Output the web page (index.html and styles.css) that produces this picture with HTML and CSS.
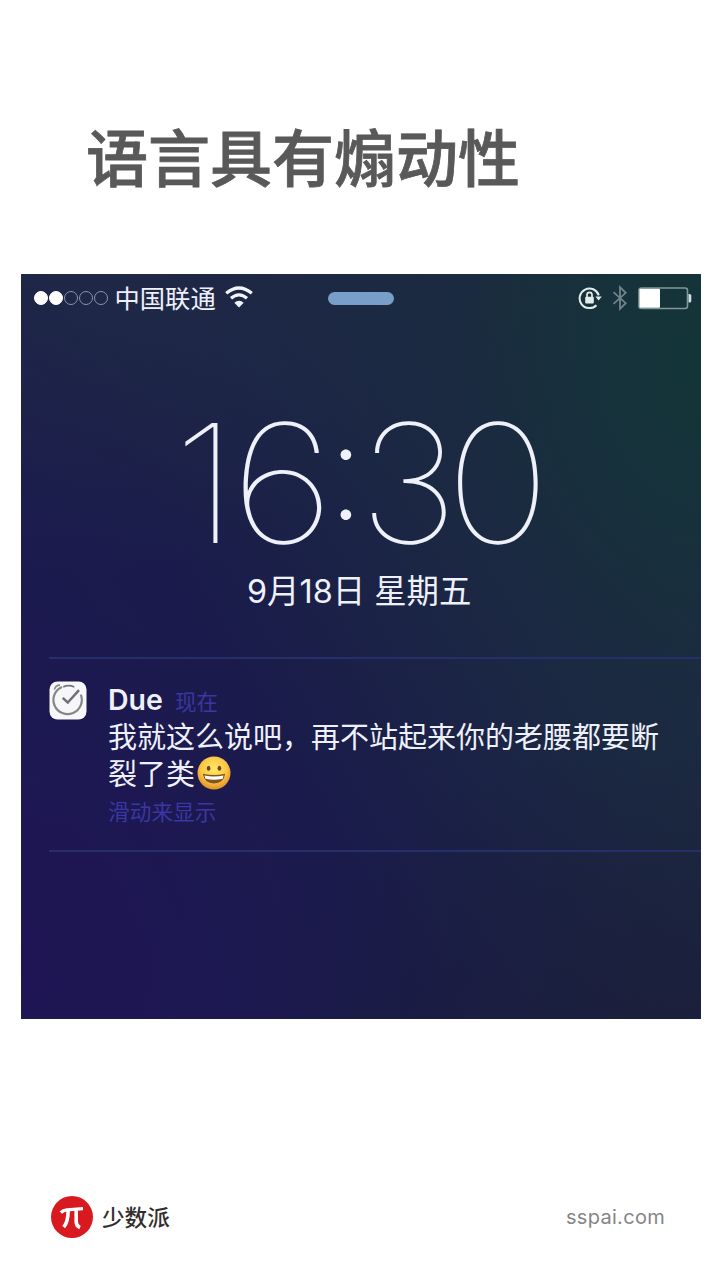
FILE: index.html
```html
<!DOCTYPE html>
<html lang="zh-CN">
<head>
<meta charset="utf-8">
<title>语言具有煽动性</title>
<link rel="stylesheet" href="styles.css">
</head>
<body>
<main class="page">
  <h1 class="title">语言具有煽动性</h1>

  <section class="phone">
    <div class="status">
      <div class="status-left">
        <div class="signal"><i class="dot full"></i><i class="dot full"></i><i class="dot"></i><i class="dot"></i><i class="dot"></i></div>
        <span class="carrier">中国联通</span>
        <svg class="wifi" width="28" height="22" viewBox="0 0 28 22" fill="none" stroke="#f2f5fc" stroke-width="3.2">
          <path d="M1.2 7.2Q14 -3.2 26.8 7.2"/>
          <path d="M6 12.3Q14 5.4 22 12.3"/>
          <path d="M14 21.5L9.3 16.8Q14 12.8 18.7 16.8Z" fill="#f2f5fc" stroke="none"/>
        </svg>
      </div>
      <div class="grabber"></div>
      <div class="status-right">
        <svg class="lock" width="24" height="24" viewBox="0 0 24 24" fill="none" stroke="#e4ebed" stroke-width="2">
          <path d="M18.4 19.2A9.8 9.8 0 1 1 20.8 9.4"/>
          <path d="M17.4 10.4h6.4l-3.2 4.2z" fill="#e4ebed" stroke="none"/>
          <rect x="7.2" y="10.8" width="8.6" height="6.8" rx="1" fill="#e4ebed" stroke="none"/>
          <path d="M9 11V8.8a2.5 2.5 0 0 1 5 0V11" stroke-width="1.7"/>
        </svg>
        <svg class="bluetooth" width="16" height="26" viewBox="0 0 16 26" fill="none" stroke="#71838a" stroke-width="1.8">
          <path d="M1.5 7.2L13.7 18.2L8 23.8V2.2L13.7 7.8L1.5 18.8"/>
        </svg>
        <svg class="battery" width="54" height="23" viewBox="0 0 54 23">
          <rect x="1" y="1" width="48.5" height="20.5" rx="2.5" fill="none" stroke="#81979b" stroke-width="1.6"/>
          <rect x="1.5" y="1.8" width="20.5" height="19" rx="1" fill="#fff"/>
          <path d="M50.5 7h1q1.8 0 1.8 1.5v5.5q0 1.5-1.8 1.5h-1z" fill="#d5dddf"/>
        </svg>
      </div>
    </div>

    <div class="clock"><span class="one">1</span><span class="six">6</span><span class="colon">:</span><span class="three">3</span><span class="zero">0</span></div>
    <div class="date">9月18日 星期五</div>

    <article class="notice">
      <svg class="app" width="38" height="40" viewBox="0 0 38 40" fill="none">
        <rect x=".5" y=".5" width="37" height="38" rx="8" fill="#f7f7fa"/>
        <path d="M13 5.9A14.2 14.2 0 1 0 31.8 13.6" stroke="#85868c" stroke-width="2.2"/>
        <path d="M14.2 5.8Q20 3.4 25.3 6" stroke="#74757b" stroke-width="1.8"/>
        <path d="M5.3 8.6Q6.5 4.2 11 4.1" stroke="#8a8b91" stroke-width="1.6"/>
        <path d="M13.7 16.8L18.8 21.5L30 9.2" stroke="#707178" stroke-width="2.5"/>
      </svg>
      <div class="message">
        <div class="heading"><b class="name">Due</b><span class="when">现在</span></div>
        <p class="body">我就这么说吧，再不站起来你的老腰都要断</p>
        <p class="body second">裂了类<svg class="smile" role="img" aria-label="😀" width="34" height="34" viewBox="0 0 34 34">
          <defs><radialGradient id="face" cx=".5" cy=".38" r=".63"><stop offset="0" stop-color="#ffe666"/><stop offset=".6" stop-color="#fbc845"/><stop offset="1" stop-color="#de8d27"/></radialGradient></defs>
          <circle cx="17" cy="17" r="16.5" fill="url(#face)"/>
          <ellipse cx="11.6" cy="12.2" rx="1.8" ry="2.5" fill="#6d451c"/>
          <ellipse cx="22.4" cy="12.2" rx="1.8" ry="2.5" fill="#6d451c"/>
          <path d="M5.8 17.8Q17 20.4 28.2 17.8Q26.7 27.5 17 27.5Q7.3 27.5 5.8 17.8Z" fill="#80551d"/>
          <path d="M7.4 19.4Q17 21.4 26.6 19.4L25.6 22.8Q17 24.8 8.4 22.8Z" fill="#fff"/>
        </svg></p>
        <p class="hint">滑动来显示</p>
      </div>
    </article>
  </section>

  <footer class="footer">
    <div class="brand">
      <svg width="42" height="42" viewBox="0 0 42 42" fill="none" stroke="#fff">
        <circle cx="21" cy="21" r="21" fill="#d91920" stroke="none"/>
        <path d="M9.8 16.6Q12 14.2 16 13.8L32 12.6" stroke-width="3.3"/>
        <path d="M17.1 14.5Q17.3 25.5 12.7 31.2" stroke-width="3.6"/>
        <path d="M25.2 14V26Q25.3 30 29 31.6" stroke-width="3.6"/>
      </svg>
      <span class="brand-name">少数派</span>
    </div>
    <span class="site">sspai.com</span>
  </footer>
</main>
</body>
</html>
```

FILE: styles.css
```css
* { box-sizing: border-box; }
body { margin: 0; background: #fff; }
h1, p { margin: 0; }
svg { display: block; flex: none; }

.page {
  width: 720px;
  height: 1280px;
  display: flex;
  flex-direction: column;
  overflow: hidden;
  font-family: Inter, "Noto Sans CJK SC", sans-serif;
}
.title {
  height: 274px;
  padding: 110px 0 0 86px;
  color: #595959;
  font: 500 62px/90px "Noto Sans CJK SC", sans-serif;
  -webkit-text-stroke: .8px #595959;
  white-space: nowrap;
}

.phone {
  width: 680px;
  height: 745px;
  margin-left: 21px;
  color: #eef0fa;
  background:
    radial-gradient(ellipse 240px 330px at 100% 12%, rgba(18, 54, 56, .85), rgba(22, 48, 56, 0)),
    radial-gradient(ellipse 330px 360px at 0% 92%, rgba(32, 20, 84, .8), rgba(28, 22, 80, 0)),
    radial-gradient(ellipse 400px 330px at 12% -4%, rgba(31, 42, 70, .95), rgba(30, 38, 70, 0)),
    radial-gradient(ellipse 480px 340px at 100% 108%, rgba(27, 29, 56, .95), rgba(27, 31, 58, 0)),
    linear-gradient(60deg, #1c1954 5%, #1a1b4b 38%, #1b2842 65%, #1a303b 100%);
}

.status {
  height: 48px;
  padding: 0 9px 0 12.5px;
  display: grid;
  grid-template-columns: 294.5px 66px 1fr;
  align-items: center;
}
.status-left, .status-right { display: flex; align-items: center; }
.status-left { padding-bottom: 3px; }
.status-right { justify-content: flex-end; }
.signal { display: flex; gap: 1px; width: 76px; padding-top: 3px; }
.dot { width: 14.2px; height: 14.2px; border: 1.4px solid #8a94aa; border-radius: 50%; }
.dot.full { border-color: #fff; background: #fff; }
.carrier { margin-left: 5px; width: 102px; font: 400 25.3px/36px "Noto Sans CJK SC", sans-serif; white-space: nowrap; }
.wifi { margin: 1px 0 0 8.5px; }
.grabber { height: 13px; margin-top: 1px; border-radius: 7px; background: #789fca; }
.lock { margin-bottom: 1px; }
.bluetooth { margin: 0 10px; }

.clock {
  height: 235px;
  padding: 81px 0 0 157px;
  display: flex;
  font: 100 165px/160px Inter, sans-serif;
}
.clock span { display: flex; flex: none; justify-content: center; height: 160px; }
.one { width: 54px; transform: scaleX(1.06); }
.six { width: 81px; margin-left: 10px; transform: scaleX(1.12); }
.clock .colon { width: 46px; transform: translateY(-13px); font-size: 135px; font-weight: 200; }
.three { width: 79px; transform: scaleX(1.03); }
.zero { width: 100px; transform: scaleX(1.08); }
.date {
  height: 100px;
  padding: 10px 0 0 226px;
  font: 400 32.4px/50px Inter, "Noto Sans CJK SC", sans-serif;
  white-space: pre;
}

.notice {
  height: 195px;
  margin-left: 28px;
  padding-top: 22px;
  display: flex;
  border-top: 2px solid #25306b;
  border-bottom: 2px solid #25306b;
}
.message { margin-left: 21px; padding-top: 1px; }
.heading { display: flex; align-items: baseline; height: 35px; line-height: 36px; }
.name { font-size: 28.5px; font-weight: 600; }
.when { margin-left: 12px; color: #3a36a2; font-size: 21.5px; }
.body { height: 37px; font: 400 29px/37px "Noto Sans CJK SC", sans-serif; white-space: nowrap; }
.second { display: flex; align-items: center; }
.smile { margin-left: 2px; }
.hint { padding-top: 2px; color: #3a36a2; font: 400 21.7px/36px "Noto Sans CJK SC", sans-serif; }

.footer {
  margin-top: 177px;
  padding: 0 55px 0 51px;
  display: flex;
  align-items: center;
  justify-content: space-between;
}
.brand { display: flex; align-items: center; gap: 9px; }
.brand-name { color: #332e2d; font: 500 22.6px/36px "Noto Sans CJK SC", sans-serif; }
.site { color: #858585; font: 400 20px/30px Inter, sans-serif; letter-spacing: .3px; }
```
